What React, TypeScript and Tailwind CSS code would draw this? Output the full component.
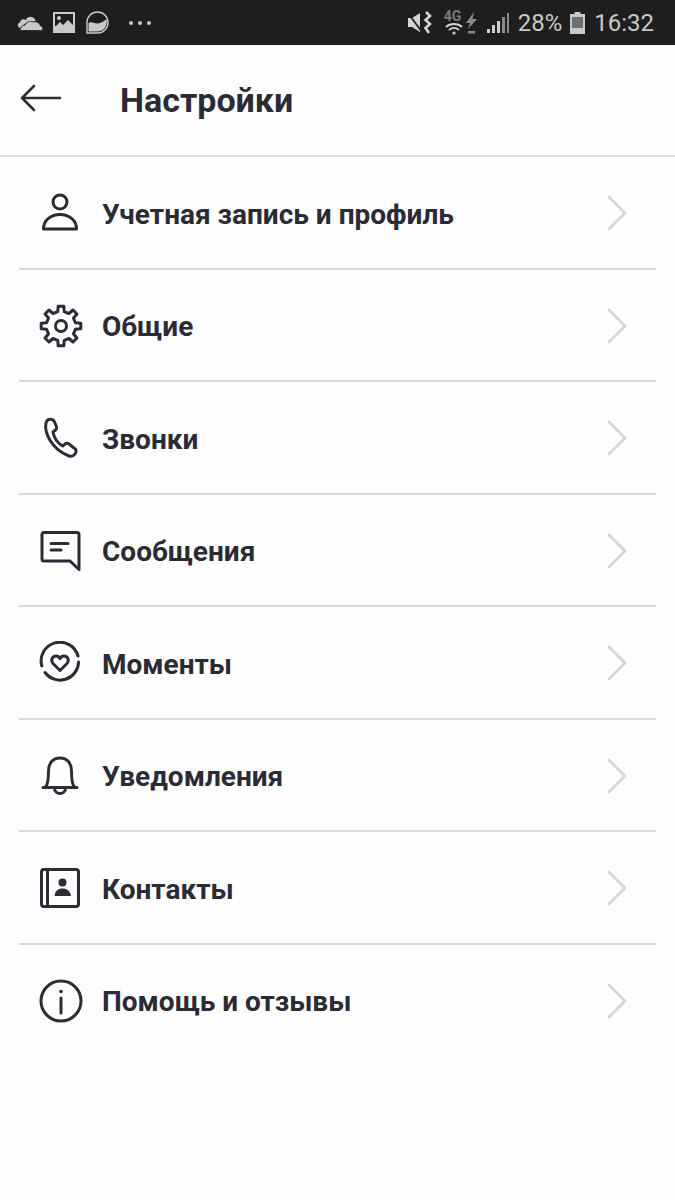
const ink = '#2b2c36';

const gearPath = (() => {
  const pts: string[] = [];
  const teeth = 8;
  for (let i = 0; i < teeth; i++) {
    const a = (i / teeth) * Math.PI * 2 - Math.PI / 2;
    const step = (Math.PI * 2) / teeth;
    const p = (r: number, t: number) =>
      `${(22 + r * Math.cos(a + t)).toFixed(2)} ${(22 + r * Math.sin(a + t)).toFixed(2)}`;
    pts.push(p(14.8, -step * 0.28), p(20, -step * 0.18), p(20, step * 0.18), p(14.8, step * 0.28));
  }
  return 'M' + pts.join(' L') + ' Z';
})();

const Icon = ({ children }: { children: React.ReactNode }) => (
  <svg
    className="w-[44px] h-[44px] shrink-0"
    viewBox="0 0 44 44"
    fill="none"
    stroke={ink}
    strokeWidth="3"
    strokeLinecap="round"
    strokeLinejoin="round"
  >
    {children}
  </svg>
);

const Chevron = () => (
  <svg className="w-[20px] h-[36px] shrink-0" viewBox="0 0 20 36" fill="none" stroke="#d6d6d6" strokeWidth="2.8" strokeLinecap="round" strokeLinejoin="round">
    <path d="M2 2 L18 18 L2 34" />
  </svg>
);

const items = [
  {
    label: 'Учетная запись и профиль',
    icon: (
      <>
        <circle cx="21" cy="11" r="7" />
        <path d="M4.5 38 C4.5 29 12 23.5 21 23.5 C30 23.5 37.5 29 37.5 38 Z" />
      </>
    ),
  },
  {
    label: 'Общие',
    icon: (
      <>
        <path d={gearPath} />
        <circle cx="22" cy="22" r="5.5" />
      </>
    ),
  },
  {
    label: 'Звонки',
    icon: (
      <path d="M7 7 C5 16 12 33 30 40 C33 41 36 39 37 36 C37.5 34 37 33 35 32 L30 28 C28.5 27 27 27 26 28 L24 30 C19 28 15 22 14 16 L16.5 14 C17.5 13 18 12 17.5 10.5 L15 5 C14 3 12 3 10 3.5 C8 4 7.5 5 7 7 Z" />
    ),
  },
  {
    label: 'Сообщения',
    icon: (
      <>
        <path d="M5 3.5 H38 a2 2 0 0 1 2 2 V40.5 L31 32 H5 a2 2 0 0 1 -2 -2 V5.5 a2 2 0 0 1 2 -2 Z" />
        <path d="M12 14.5 H29 M12 21 H22" />
      </>
    ),
  },
  {
    label: 'Моменты',
    icon: (
      <>
        <path d="M2.8 25 A18.6 18.6 0 0 1 39 15" />
        <path d="M39.6 21 A18.6 18.6 0 0 1 6 31.5" />
        <path d="M21 29.5 L14 22.5 C11.5 19.5 13 15 17 15 C19 15 20.2 16 21 17.5 C21.8 16 23 15 25 15 C29 15 30.5 19.5 28 22.5 Z" />
      </>
    ),
  },
  {
    label: 'Уведомления',
    icon: (
      <>
        <path d="M6.5 33 C8.5 31 9.5 27 9.5 17 C9.5 9 14 4 21 4 C28 4 32.5 9 32.5 17 C32.5 27 33.5 31 35.5 33" />
        <path d="M4 33.5 H38" />
        <path d="M15.5 34 a5.5 5.5 0 0 0 11 0" />
      </>
    ),
  },
  {
    label: 'Контакты',
    icon: (
      <>
        <rect x="2.5" y="3.5" width="37" height="37" rx="2.5" />
        <path d="M8.5 3.5 V40.5" />
        <circle cx="23.5" cy="16.5" r="4" fill={ink} stroke="none" />
        <path d="M15.5 30 C16 25 19 22.5 23.5 22.5 C28 22.5 31 25 32 30 Z" fill={ink} stroke="none" />
      </>
    ),
  },
  {
    label: 'Помощь и отзывы',
    icon: (
      <>
        <circle cx="22" cy="22" r="20" />
        <circle cx="22" cy="12.5" r="1.8" fill={ink} stroke="none" />
        <path d="M22 19 V34" />
      </>
    ),
  },
];

const StatusBar = () => (
  <div className="h-[45px] bg-[#1e1e1e] flex items-center justify-between pl-[17px] pr-[21px] text-[#c9c9c9] font-['Roboto',sans-serif]">
    <div className="flex items-center">
      <svg className="w-[26px] h-[17px]" viewBox="0 0 26 17" fill="#c9c9c9">
        <path d="M3 14 C0 13 0 9 3 8.5 C3.5 5 7 4.5 9 6 C10 3 14 2 16 3.5 C18 5 18.5 6 18.5 7 L9 9 Z" />
        <path d="M2 16.5 C4 16.5 3 11.5 8 11 C9 8 13 6.5 16 8 C19 7 23 9 23 11.5 C25 12 26.5 14 25.5 15.5 C25 16.5 24 16.5 23 16.5 Z" stroke="#1e1e1e" strokeWidth="0.8" />
      </svg>
      <svg className="w-[22px] h-[21px] ml-[10px]" viewBox="0 0 22 21">
        <rect width="22" height="21" fill="#c9c9c9" />
        <rect x="2" y="2" width="18" height="12" fill="#1e1e1e" />
        <circle cx="6" cy="6" r="2" fill="#c9c9c9" />
        <path d="M2 15 L7 10 L10 13 L15 8 L20 13 V18 H2 Z" fill="#c9c9c9" />
      </svg>
      <svg className="w-[23px] h-[23px] ml-[11px]" viewBox="0 0 23 23">
        <path d="M11.5 1 A10.5 10.5 0 0 1 11.5 22 H1 V11.5 A10.5 10.5 0 0 1 11.5 1 Z" fill="#1e1e1e" stroke="#c9c9c9" strokeWidth="1.4" />
        <path d="M2.5 12 C7 9 10 17 20.5 8 C22 14 18 20.5 11.5 20.5 H2.5 Z" fill="#c9c9c9" />
      </svg>
      <div className="flex gap-[5px] ml-[20px]">
        <span className="w-[4px] h-[4px] rounded-full bg-[#c9c9c9]" />
        <span className="w-[4px] h-[4px] rounded-full bg-[#c9c9c9]" />
        <span className="w-[4px] h-[4px] rounded-full bg-[#c9c9c9]" />
      </div>
    </div>
    <div className="flex items-center">
      <svg className="w-[24px] h-[23px]" viewBox="0 0 24 23" fill="#d4d4d4">
        <path d="M0 7 H4 L12 2 V21 L4 16 H0 Z" />
        <path d="M0 2 L14 21" stroke="#1e1e1e" strokeWidth="1.8" />
        <path d="M18 1 L22 5 L17.5 9 L22 13 L17.5 17 L21 22" fill="none" stroke="#d4d4d4" strokeWidth="2.6" />
      </svg>
      <div className="relative w-[20px] h-[22px] ml-[12px]">
        <span className="absolute -top-[3px] left-0 text-[14px] font-bold leading-[14px] text-[#7b7b7b]">4G</span>
        <svg className="absolute left-[1px] -bottom-[1px] w-[18px] h-[12px]" viewBox="0 0 18 12" fill="none" stroke="#d0d0d0" strokeWidth="1.8">
          <path d="M1 4 C5 0 13 0 17 4 M4 7 C7 4.5 11 4.5 14 7" />
          <circle cx="9" cy="10" r="1.6" fill="#d0d0d0" stroke="none" />
        </svg>
      </div>
      <svg className="w-[11px] h-[22px] ml-[2px]" viewBox="0 0 11 22" fill="#8a8a8a">
        <path d="M8 0 L0 11 H4 L2 17 L11 7 H6.5 Z" />
        <path d="M2 19 H9 V21.5 H2 Z" />
      </svg>
      <svg className="w-[22px] h-[20px] ml-[10px]" viewBox="0 0 22 20" fill="#d0d0d0">
        <rect x="0" y="16" width="3" height="4" />
        <rect x="5" y="12" width="3" height="8" />
        <rect x="10" y="8" width="3" height="12" />
        <rect x="15" y="4" width="3" height="16" fill="#8a8a8a" />
        <rect x="20" y="0" width="2" height="20" fill="#8a8a8a" />
      </svg>
      <span className="text-[24px] leading-none ml-[9px]">28%</span>
      <svg className="w-[15px] h-[22px] ml-[8px]" viewBox="0 0 15 22">
        <path d="M4.5 0 H10.5 V2 H15 V22 H0 V2 H4.5 Z" fill="#c9c9c9" />
        <rect x="2" y="5" width="11" height="11" fill="#6f6f6f" />
      </svg>
      <span className="text-[24px] leading-none ml-[9px]">16:32</span>
    </div>
  </div>
);

export default function App() {
  return (
    <div className="w-[675px] h-[1200px] bg-[#fefefe] font-['Roboto',sans-serif] overflow-hidden">
      <StatusBar />
      <div className="h-[112px] flex items-center border-b-2 border-[#dddddd]">
        <svg className="w-[42px] h-[28px] ml-[20px] -mt-[4px]" viewBox="0 0 42 28" fill="none" stroke={ink} strokeWidth="2.6" strokeLinecap="round" strokeLinejoin="round">
          <path d="M40 14 H2 M14 2 L2 14 L14 26" />
        </svg>
        <h1 className="ml-[58px] text-[34px] font-bold text-[#2a2b35]">Настройки</h1>
      </div>
      <div>
        {items.map((item, i) => (
          <div key={item.label} className="mx-[19px] h-[112.5px] relative flex items-center pl-[20px] pr-[29px]">
            <Icon>{item.icon}</Icon>
            <span className="ml-[19px] mt-[3px] flex-1 text-[28px] font-bold text-[#2a2b35] leading-none">{item.label}</span>
            <Chevron />
            {i < items.length - 1 && <div className="absolute left-0 right-0 bottom-0 h-[2px] bg-[#d8d8de]" />}
          </div>
        ))}
      </div>
    </div>
  );
}
